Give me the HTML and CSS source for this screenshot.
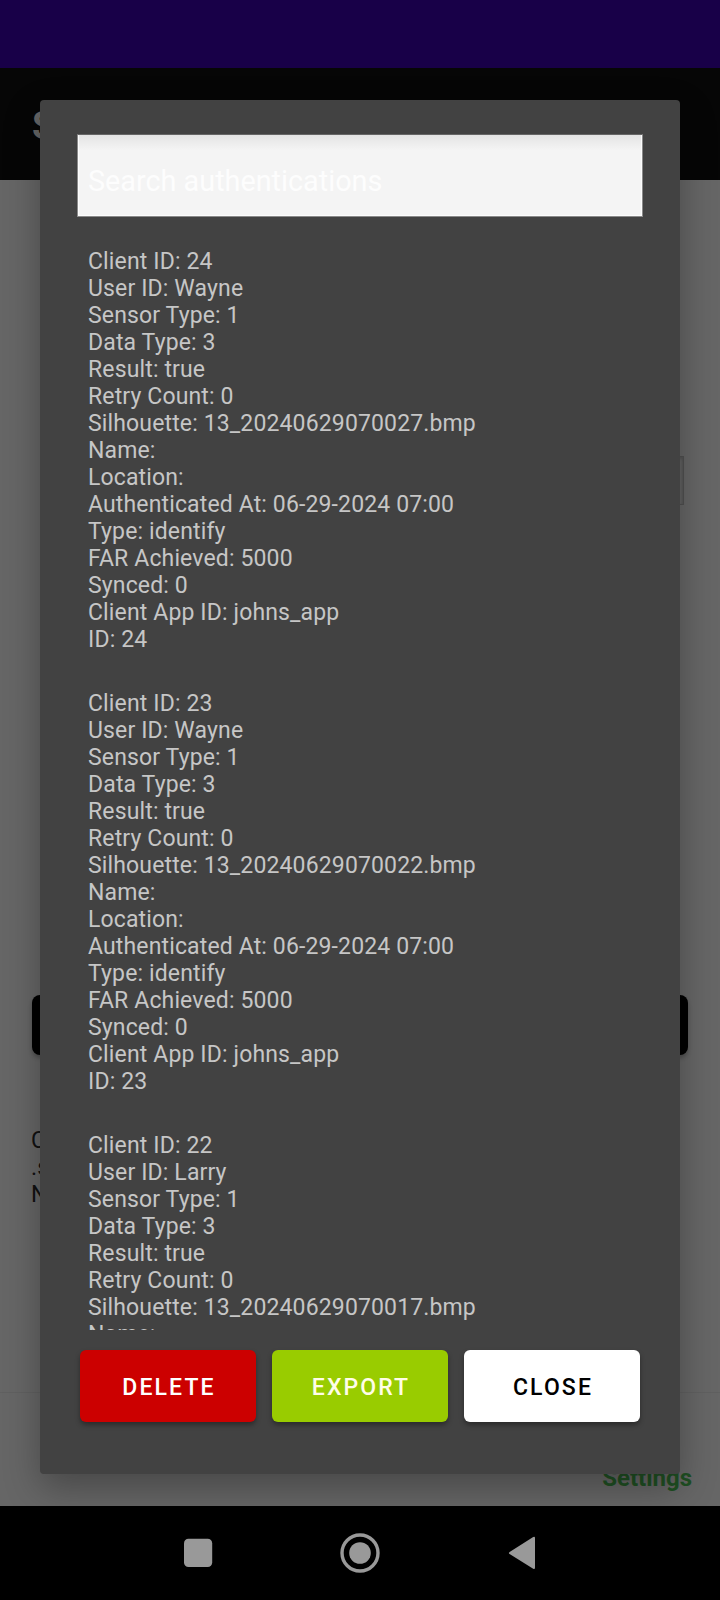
FILE: index.html
```
<!DOCTYPE html>
<html lang="en">
<head>
<meta charset="utf-8">
<title>Authentications</title>
<link rel="stylesheet" href="styles.css">
</head>
<body>
<div class="screen">
  <div class="status-bar"></div>
  <header class="app-bar">S</header>
  <main class="page">
    <div class="page-field"></div>
    <div class="page-button"></div>
    <div class="page-info">C<br>.s<br>N</div>
    <footer class="page-footer">Settings</footer>
  </main>
  <nav class="nav-bar">
    <svg width="360" height="94" viewBox="0 0 360 94" fill="#999">
      <rect x="4" y="32.8" width="28.2" height="28.2" rx="4.5"/>
      <circle cx="180" cy="47" r="18" fill="none" stroke="#999" stroke-width="3.4"/>
      <circle cx="180" cy="47" r="10.8"/>
      <path d="M330 45.7 353.2 31Q355 30.200 355 32V61.500Q355 63.800 353.200 62.800L330 48.300Q327.700 47 330 45.700Z"/>
    </svg>
  </nav>

  <section class="dialog">
    <div class="search">Search authentications</div>
    <div class="list">
      <div class="entry">
        <div>Client ID: 24</div>
        <div>User ID: Wayne</div>
        <div>Sensor Type: 1</div>
        <div>Data Type: 3</div>
        <div>Result: true</div>
        <div>Retry Count: 0</div>
        <div>Silhouette: 13_20240629070027.bmp</div>
        <div>Name:</div>
        <div>Location:</div>
        <div>Authenticated At: 06-29-2024 07:00</div>
        <div>Type: identify</div>
        <div>FAR Achieved: 5000</div>
        <div>Synced: 0</div>
        <div>Client App ID: johns_app</div>
        <div>ID: 24</div>
      </div>
      <div class="entry">
        <div>Client ID: 23</div>
        <div>User ID: Wayne</div>
        <div>Sensor Type: 1</div>
        <div>Data Type: 3</div>
        <div>Result: true</div>
        <div>Retry Count: 0</div>
        <div>Silhouette: 13_20240629070022.bmp</div>
        <div>Name:</div>
        <div>Location:</div>
        <div>Authenticated At: 06-29-2024 07:00</div>
        <div>Type: identify</div>
        <div>FAR Achieved: 5000</div>
        <div>Synced: 0</div>
        <div>Client App ID: johns_app</div>
        <div>ID: 23</div>
      </div>
      <div class="entry">
        <div>Client ID: 22</div>
        <div>User ID: Larry</div>
        <div>Sensor Type: 1</div>
        <div>Data Type: 3</div>
        <div>Result: true</div>
        <div>Retry Count: 0</div>
        <div>Silhouette: 13_20240629070017.bmp</div>
        <div>Name:</div>
      </div>
    </div>
    <div class="actions">
      <div class="btn btn-delete">DELETE</div>
      <div class="btn btn-export">EXPORT</div>
      <div class="btn btn-close">CLOSE</div>
    </div>
  </section>
</div>
</body>
</html>
```

FILE: styles.css
```
* { box-sizing: border-box; }
body { margin: 0; font-family: Roboto, "Liberation Sans", sans-serif; }
.screen {
  position: relative;
  display: flex;
  flex-direction: column;
  width: 720px;
  height: 1600px;
  overflow: hidden;
  background: #666;
}
.status-bar { height: 68px; background: #180048; }
.app-bar {
  height: 112px;
  padding: 0 32px;
  background: #060606;
  color: #666;
  font-size: 38px;
  font-weight: 700;
  line-height: 117px;
}
.page { flex: 1; display: flex; flex-direction: column; }
.page-field {
  height: 49px;
  margin: 276px 36px 0 60px;
  border: 1px solid #505050;
  box-shadow: inset 0 2px 3px #555, inset -1px 0 2px #585858;
}
.page-button {
  height: 60px;
  margin: 490px 32px 0;
  border-radius: 8px;
  background: #000;
  box-shadow: 0 3px 4px rgba(0, 0, 0, .25);
}
.page-info {
  margin: 72px 31px 0;
  color: #111;
  font-size: 23px;
  line-height: 27px;
  letter-spacing: .1px;
}
.page-footer {
  margin-top: auto;
  height: 114px;
  padding: 72px 28px 0;
  border-top: 1px solid #606060;
  color: #1f5023;
  font-size: 24px;
  font-weight: 700;
  line-height: 27px;
  text-align: right;
}
.nav-bar { height: 94px; display: flex; justify-content: center; background: #000; }

.dialog {
  position: absolute;
  left: 40px;
  top: 100px;
  width: 640px;
  height: 1374px;
  display: flex;
  flex-direction: column;
  padding: 34px 37px 52px;
  border-radius: 4px;
  background: #424242;
  box-shadow: 0 14px 36px rgba(0, 0, 0, .3);
}
.search {
  height: 83px;
  padding: 0 10px;
  border: 1px solid #8a8a8a;
  border-top-color: #666;
  background: linear-gradient(#e4e4e4, #f4f4f4 15px);
  box-shadow: inset -1px -1px #fcfcfc, inset 1px 0 #fcfcfc;
  color: #fdfdfd;
  font-size: 28.8px;
  line-height: 93px;
}
.list {
  height: 1083px;
  margin: 30px 11px 0;
  overflow: hidden;
  color: #c6c6c6;
  font-size: 23px;
  line-height: 27px;
  letter-spacing: .14px;
  white-space: nowrap;
}
.entry { padding: 1px 0 36px; }
.actions { display: flex; gap: 16px; margin: 20px 3px 0; }
.btn {
  flex: 1;
  height: 72px;
  padding-left: 2px;
  border-radius: 6px;
  box-shadow: 0 3px 5px rgba(0, 0, 0, .35);
  color: #fff;
  font-size: 23px;
  font-weight: 500;
  line-height: 75px;
  letter-spacing: 2.1px;
  text-align: center;
}
.btn-delete { background: #c00; }
.btn-export { background: #9c0; color: #fffde8; }
.btn-close { background: #fff; color: #000; }
```
